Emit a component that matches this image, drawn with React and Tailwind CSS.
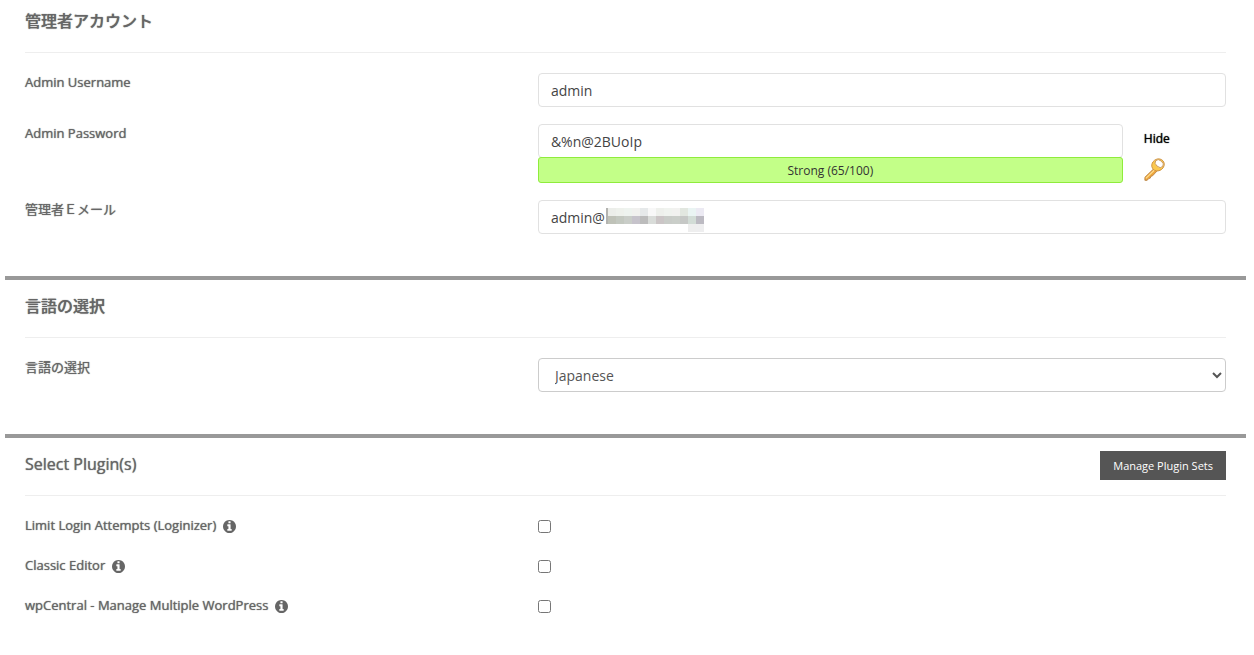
import React, { useState } from 'react';

const plugins = [
  { id: 'loginizer', name: 'Limit Login Attempts (Loginizer)' },
  { id: 'classic-editor', name: 'Classic Editor' },
  { id: 'wpcentral', name: 'wpCentral - Manage Multiple WordPress' },
];

// rows of 8px tiles that mask the mail domain
const maskTiles = [
  ['#eceeea', '#eef1ec', '#eef3ef', '#f1f1ef', '#e6e9ea', '#f8f8f8', '#eef0ec', '#f0f3ef', '#f2f2f0', '#e2e7e0', '#eaf4f3', '#eceaf3'],
  ['#bfc2b8', '#c3c8c0', '#c9cdc8', '#c6c3cb', '#bcbcbc', '#d9dcd9', '#cbc5c6', '#c9ccc8', '#cacec9', '#c6c8c6', '#d2dcd6', '#bcbac2'],
  ['#ffffff', '#ffffff', '#ffffff', '#ffffff', '#ffffff', '#ffffff', '#ffffff', '#ffffff', '#ffffff', '#ffffff', '#eeeeee', '#eeeeef'],
];

const inputClass =
  'block w-full h-[34px] px-3 rounded border border-[#e1e1e1] bg-white text-sm text-[#444]';

const InfoIcon = () => (
  <svg width="13" height="13" viewBox="0 128 1536 1536" fill="currentColor" className="mt-[2px]">
    <path d="M1024 1376v-160q0-14-9-23t-23-9h-96v-512q0-14-9-23t-23-9h-320q-14 0-23 9t-9 23v160q0 14 9 23t23 9h96v320h-96q-14 0-23 9t-9 23v160q0 14 9 23t23 9h448q14 0 23-9t9-23zm-128-896v-160q0-14-9-23t-23-9h-192q-14 0-23 9t-9 23v160q0 14 9 23t23 9h192q14 0 23-9t9-23zm640 416q0 209-103 385.5t-279.5 279.5-385.5 103-385.5-103-279.5-279.5-103-385.5 103-385.5 279.5-279.5 385.5-103 385.5 103 279.5 279.5 103 385.5z" />
  </svg>
);

const KeyIcon = () => (
  <svg width="22" height="24" viewBox="0 0 22 24" fill="none">
    <path d="M10.5 11 0.9 20.3v3h2.3l1.4-1.7 1.7-.5.5-1.7 1.8-.6L13.4 13.6z" fill="#eda53c" stroke="#b98244" strokeWidth=".9" strokeLinejoin="round" />
    <path d="M11.3 12.2 1.8 21.4" stroke="#ffdc8c" strokeWidth="1.3" />
    <ellipse cx="14" cy="7.9" rx="6.5" ry="5.8" transform="rotate(-35 14 7.9)" fill="#fbc94f" stroke="#cf9446" strokeWidth=".9" />
    <ellipse cx="15.2" cy="6.6" rx="4.5" ry="3.3" transform="rotate(40 15.2 6.6)" fill="#fff" stroke="#c9985a" strokeWidth=".9" />
  </svg>
);

const Section = ({ title, action, first, children }) => (
  <section className={first ? 'px-5 pt-[11px] pb-[42px]' : 'px-5 pt-4 pb-[42px] border-t-4 border-[#999]'}>
    <div className="flex justify-between items-start h-[41px]">
      <h2 className="text-base leading-5 font-medium text-shadow-[0_0_1px_#666]">{title}</h2>
      {action}
    </div>
    <div className="border-t border-[#eee] pt-5">{children}</div>
  </section>
);

const Row = ({ id, label, children }) => (
  <div className="grid grid-cols-12 gap-x-[30px] items-start">
    <label htmlFor={id} className="col-span-5 text-[13px] leading-[18px] text-shadow-[0_0_1px_#666]">
      {label}
    </label>
    <div className="col-span-7">{children}</div>
  </div>
);

const App = () => {
  const [visible, setVisible] = useState(true);

  return (
    <main className="bg-white text-[#666] pl-[5px] pr-2 font-['Open_Sans','Noto_Sans_CJK_JP',sans-serif]">
      <Section title="管理者アカウント" first>
        <div className="flex flex-col gap-[17px]">
          <Row id="username" label="Admin Username">
            <input id="username" type="text" defaultValue="admin" className={inputClass} />
          </Row>
          <Row id="password" label="Admin Password">
            <div className="flex items-start">
              <div className="w-[85%]">
                <input
                  id="password"
                  type={visible ? 'text' : 'password'}
                  defaultValue="&%n@2BUoIp"
                  className={inputClass}
                />
                <div className="-mt-px h-[26px] rounded-[3px] border border-[#8fec3c] bg-[#c3ff88] text-xs leading-[26px] text-center text-[#333]">
                  Strong (65/100)
                </div>
              </div>
              <div className="flex flex-col items-start pl-[21px] pt-[5px] gap-2">
                <button
                  type="button"
                  onClick={() => setVisible(!visible)}
                  className="text-xs leading-5 text-black text-shadow-[0_0_1px_#000]"
                >
                  {visible ? 'Hide' : 'Show'}
                </button>
                <button type="button" aria-label="Generate password">
                  <KeyIcon />
                </button>
              </div>
            </div>
          </Row>
          <Row id="email" label="管理者Ｅメール">
            <div className="relative">
              <input id="email" type="text" defaultValue="admin@" className={inputClass} />
              <div className="absolute left-[68px] top-2 flex items-start">
                <span className="w-[2px] h-4 bg-[#b3b3b0]" />
                <div>
                  {maskTiles.map((tiles, row) => (
                    <div key={row} className="flex">
                      {tiles.map((color, i) => (
                        <span key={i} className="size-2" style={{ backgroundColor: color }} />
                      ))}
                    </div>
                  ))}
                </div>
              </div>
            </div>
          </Row>
        </div>
      </Section>

      <Section title="言語の選択">
        <Row id="language" label="言語の選択">
          <select
            id="language"
            defaultValue="Japanese"
            className="block w-full h-[34px] px-3 rounded border border-[#ccc] bg-white text-sm text-[#555]"
          >
            <option>English</option>
            <option>Japanese</option>
          </select>
        </Row>
      </Section>

      <Section
        title="Select Plugin(s)"
        action={
          <button type="button" className="-mt-[3px] h-[29px] px-[13px] pt-[2px] bg-[#555] text-[11px] text-white">
            Manage Plugin Sets
          </button>
        }
      >
        <div className="flex flex-col gap-[22px]">
          {plugins.map((plugin) => (
            <Row
              key={plugin.id}
              id={plugin.id}
              label={
                <span className="flex items-center gap-[7px]">
                  {plugin.name}
                  <InfoIcon />
                </span>
              }
            >
              <input id={plugin.id} type="checkbox" className="block size-[13px] mt-1" />
            </Row>
          ))}
        </div>
      </Section>
    </main>
  );
};

export default App;
